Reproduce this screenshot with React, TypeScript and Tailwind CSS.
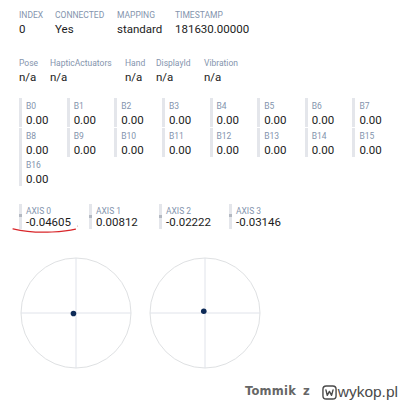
import React from "react";

const labelCls = "text-[8.5px] leading-[10px] text-[#8494ad] whitespace-nowrap";
const valueCls = "text-[11.5px] leading-[14px] text-[#1c1c1c] whitespace-nowrap";

function Field({ label, value, w }: { label: string; value: string; w: string }) {
  return (
    <div className={w}>
      <div className={labelCls}>{label}</div>
      <div className={"mt-[2px] " + valueCls}>{value}</div>
    </div>
  );
}

function Stick({ x, y }: { x: number; y: number }) {
  const r = 55;
  return (
    <svg width="112" height="112" viewBox="0 0 112 112" className="shrink-0">
      <circle cx="56" cy="56" r={r} fill="none" stroke="#dadcdf" strokeWidth="0.9" />
      <line x1="1" y1="56" x2="111" y2="56" stroke="#dce0e8" strokeWidth="0.9" />
      <line x1="56" y1="1" x2="56" y2="111" stroke="#dce0e8" strokeWidth="0.9" />
      <circle cx={56 + x * r} cy={56 + y * r} r="2.8" fill="#0d2a57" />
    </svg>
  );
}

export default function App() {
  const buttons = Array.from({ length: 17 }, (_, i) => `B${i}`);
  const axes = [-0.04605, 0.00812, -0.02222, -0.03146];
  return (
    <div className="relative w-[400px] h-[402px] overflow-hidden bg-white font-['Roboto',sans-serif]">
      <div className="pl-[19px] pt-[10px]">
        <div className="flex">
          <Field label="INDEX" value="0" w="w-[36px]" />
          <Field label="CONNECTED" value="Yes" w="w-[62px]" />
          <Field label="MAPPING" value="standard" w="w-[58px]" />
          <Field label="TIMESTAMP" value="181630.00000" w="w-[100px]" />
        </div>
        <div className="mt-[22px] flex">
          <Field label="Pose" value="n/a" w="w-[31px]" />
          <Field label="HapticActuators" value="n/a" w="w-[75px]" />
          <Field label="Hand" value="n/a" w="w-[31px]" />
          <Field label="DisplayId" value="n/a" w="w-[48px]" />
          <Field label="Vibration" value="n/a" w="w-[60px]" />
        </div>

        <div className="mt-[14px] grid w-[381px] grid-cols-8 gap-y-[0.7px]">
          {buttons.map((b) => (
            <div key={b} className="h-[29px] border-l-[3px] border-[#e4e6eb] pl-[4px] pt-[3px]">
              <div className={labelCls}>{b}</div>
              <div className={"mt-[2px] " + valueCls}>0.00</div>
            </div>
          ))}
        </div>

        <div className="mt-[17.5px] flex">
          {axes.map((v, i) => (
            <div key={i} className="flex w-[70px]">
              <div className="relative h-[25px] w-[3px] shrink-0 bg-[#e4e6eb]">
                <div
                  className="absolute left-0 h-[3px] w-[3px] bg-[#b4b9c2]"
                  style={{ top: `${((v + 1) / 2) * 25 - 1.5}px` }}
                />
              </div>
              <div className="pl-[4px] pt-[2px]">
                <div className={labelCls}>{`AXIS ${i}`}</div>
                <div className="mt-[0.5px] text-[11.5px] leading-[13px] text-[#1c1c1c] whitespace-nowrap">
                  {v.toFixed(5)}
                </div>
              </div>
            </div>
          ))}
        </div>

        <div className="mt-[27.5px] ml-[1px] flex gap-[17.3px]">
          <Stick x={axes[0]} y={axes[1]} />
          <Stick x={axes[2]} y={axes[3]} />
        </div>
      </div>

      {/* red hand-drawn underline annotation */}
      <svg className="absolute left-0 top-0 pointer-events-none" width="400" height="402">
        <path
          d="M13 228.8 C 24 231.5, 40 232.6, 52 232 C 62 231.6, 70 230.6, 75.5 229.2"
          fill="none"
          stroke="#d9262a"
          strokeWidth="1.2"
          strokeLinecap="round"
        />
        <circle cx="77.5" cy="226" r="0.6" fill="#c8a0a0" />
      </svg>

      {/* watermark */}
      <div className="absolute right-[2px] bottom-[1px] flex items-center font-['DejaVu_Sans',sans-serif]">
        <span className="text-[11.5px] font-bold tracking-[0.2px] text-[#666666]">Tommik</span>
        <span className="ml-[7px] text-[11.5px] font-bold text-[#666666]">z</span>
        <svg className="ml-[12px]" width="15" height="15" viewBox="0 0 16 16">
          <rect x="1" y="1" width="14" height="14" rx="3.5" fill="none" stroke="#4a4a4a" strokeWidth="1.5" />
          <path d="M4.2 5.2 L5.6 11 L7.9 6.8 L10.2 11 L11.8 5.2" fill="none" stroke="#4a4a4a" strokeWidth="1.5" strokeLinejoin="round" strokeLinecap="round" />
        </svg>
        <span className="ml-[1px] text-[15.5px] leading-[18px] text-[#4a4a4a] font-['Liberation_Sans',Arial,sans-serif]">wykop.pl</span>
      </div>
    </div>
  );
}
